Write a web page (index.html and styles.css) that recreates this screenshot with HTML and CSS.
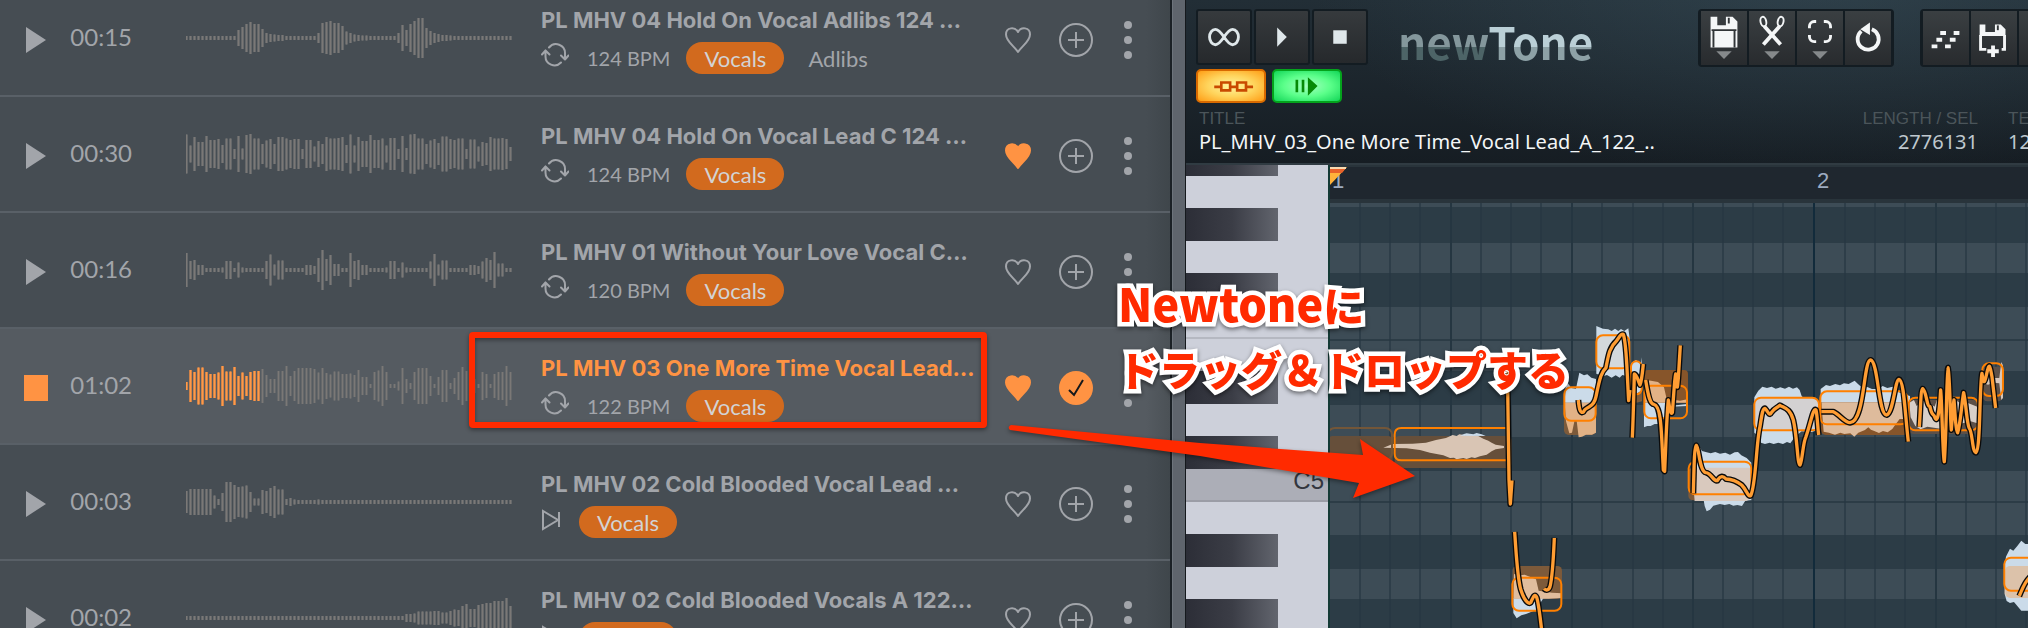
FILE: index.html
```html
<!DOCTYPE html>
<html lang="ja">
<head>
    <meta charset="UTF-8">
    <meta name="viewport" content="width=device-width, initial-scale=1.0">
    <title>Newtone drag and drop</title>
    <link rel="stylesheet" href="styles.css">
</head>
<body>

<!-- Shared icons -->
<svg class="sprite" aria-hidden="true">
    <symbol id="i-play" viewBox="0 0 24 28"><path d="M2 1v26l20-13z" fill="currentColor"/></symbol>
    <symbol id="i-stop" viewBox="0 0 24 28"><path d="M0 1h24v26H0z" fill="currentColor"/></symbol>
    <symbol id="i-loop" viewBox="0 0 28 24">
        <g fill="none" stroke="currentColor" stroke-width="2" stroke-linecap="round" stroke-linejoin="round">
            <path d="M8 4.500A9 9 0 0 1 24 10.500V16M20 12.500l4 4 3.500-4M20 19.500A9 9 0 0 1 4.500 13V7.500M1 11.500l3.500-4 4 4"/>
        </g>
    </symbol>
    <symbol id="i-shot" viewBox="0 0 20 24">
        <path d="M2 3v18l15-9zM18 4v15" fill="none" stroke="currentColor" stroke-width="2"/>
    </symbol>
    <symbol id="i-heart" viewBox="0 0 28 28">
        <path d="M14 26C9 19 2 15 2 8.500 2 1 11 .5 14 6 17 .5 26 1 26 8.500 26 15 19 19 14 26z" stroke="currentColor" stroke-width="2" stroke-linejoin="round"/>
    </symbol>
    <symbol id="i-plus" viewBox="0 0 36 36">
        <circle cx="18" cy="18" r="16" fill="none" stroke="currentColor" stroke-width="2"/>
        <path d="M18 10v16M10 18h16" stroke="currentColor" stroke-width="2"/>
    </symbol>
    <symbol id="i-check" viewBox="0 0 36 36">
        <circle cx="18" cy="18" r="17" fill="currentColor"/>
        <path d="M11 20l5 5L25 10" fill="none" stroke="#15181b" stroke-width="2"/>
    </symbol>
    <symbol id="i-more" viewBox="0 0 10 40">
        <g fill="currentColor"><circle cx="5" cy="5" r="4"/><circle cx="5" cy="20" r="4"/><circle cx="5" cy="35" r="4"/></g>
    </symbol>
</svg>

<main class="desktop">

    <!-- Sample browser -->
    <section class="browser">
        <ul class="tracks">
            <li class="track">
                <button class="play" aria-label="Play"><svg><use href="#i-play"/></svg></button>
                <span class="time">00:15</span>
                <svg class="wave" data-levels="4 4 4 4 4 4 4 4 4 4 4 4 4 16 22 28 32 28 28 18 10 8 7 6 6 4 4 4 4 4 4 4 4 10 30 32 34 30 30 24 13 10 7 6 5 5 4 4 4 4 4 4 4 10 26 16 28 34 40 40 20 14 10 8 6 6 5 4 4 4 4 4 4 4 4 4 4 4 4 4 4 4"></svg>
                <div class="info">
                    <h2>PL MHV 04 Hold On Vocal Adlibs 124 …</h2>
                    <div class="tags"><svg class="loop"><use href="#i-loop"/></svg><span class="bpm">124 BPM</span><a class="pill" href="#">Vocals</a><a class="tag" href="#">Adlibs</a></div>
                </div>
                <button class="heart" aria-label="Like"><svg><use href="#i-heart"/></svg></button>
                <button class="add" aria-label="Add"><svg><use href="#i-plus"/></svg></button>
                <button class="more" aria-label="More"><svg><use href="#i-more"/></svg></button>
            </li>
            <li class="track">
                <button class="play" aria-label="Play"><svg><use href="#i-play"/></svg></button>
                <span class="time">00:30</span>
                <svg class="wave" data-levels="39 17 34 24 24 36 28 28 30 18 31 31 10 36 11 38 40 31 31 20 27 30 20 34 34 31 28 30 30 10 28 28 15 26 20 34 31 31 32 34 18 39 17 34 26 26 38 28 28 31 17 32 32 10 36 12 39 40 31 31 20 27 30 22 35 35 30 28 31 31 10 29 29 15 24 22 34 31 31 32 30 14"></svg>
                <div class="info">
                    <h2>PL MHV 04 Hold On Vocal Lead C 124 …</h2>
                    <div class="tags"><svg class="loop"><use href="#i-loop"/></svg><span class="bpm">124 BPM</span><a class="pill" href="#">Vocals</a></div>
                </div>
                <button class="heart on" aria-label="Unlike"><svg><use href="#i-heart"/></svg></button>
                <button class="add" aria-label="Add"><svg><use href="#i-plus"/></svg></button>
                <button class="more" aria-label="More"><svg><use href="#i-more"/></svg></button>
            </li>
            <li class="track">
                <button class="play" aria-label="Play"><svg><use href="#i-play"/></svg></button>
                <span class="time">00:16</span>
                <svg class="wave" data-levels="34 18 20 10 10 4 4 4 4 5 18 18 4 15 5 4 4 4 4 4 18 31 11 19 19 4 4 4 4 4 10 10 8 24 40 22 30 12 12 4 4 34 18 20 10 10 4 4 4 4 5 18 18 4 15 5 4 4 4 4 4 17 32 11 19 19 4 4 4 4 4 10 10 8 17 24 20 36 13 13 4 4"></svg>
                <div class="info">
                    <h2>PL MHV 01 Without Your Love Vocal C…</h2>
                    <div class="tags"><svg class="loop"><use href="#i-loop"/></svg><span class="bpm">120 BPM</span><a class="pill" href="#">Vocals</a></div>
                </div>
                <button class="heart" aria-label="Like"><svg><use href="#i-heart"/></svg></button>
                <button class="add" aria-label="Add"><svg><use href="#i-plus"/></svg></button>
                <button class="more" aria-label="More"><svg><use href="#i-more"/></svg></button>
            </li>
            <li class="track active">
                <button class="play" aria-label="Stop"><svg><use href="#i-stop"/></svg></button>
                <span class="time">01:02</span>
                <svg class="wave" data-played="19" data-levels="8 32 28 37 37 28 24 24 27 40 29 29 38 20 27 20 28 30 30 34 22 14 14 30 30 40 20 30 36 36 36 36 34 27 36 26 23 29 29 24 24 25 22 32 18 18 4 28 31 40 28 4 4 9 36 14 6 28 36 36 36 20 4 18 32 32 6 16 28 38 30 36 14 4 28 24 4 24 28 28 40 28"></svg>
                <div class="info">
                    <h2>PL MHV 03 One More Time Vocal Lead…</h2>
                    <div class="tags"><svg class="loop"><use href="#i-loop"/></svg><span class="bpm">122 BPM</span><a class="pill" href="#">Vocals</a></div>
                </div>
                <button class="heart on" aria-label="Unlike"><svg><use href="#i-heart"/></svg></button>
                <button class="add on" aria-label="Added"><svg><use href="#i-check"/></svg></button>
                <button class="more" aria-label="More"><svg><use href="#i-more"/></svg></button>
            </li>
            <li class="track">
                <button class="play" aria-label="Play"><svg><use href="#i-play"/></svg></button>
                <span class="time">00:03</span>
                <svg class="wave" data-levels="22 26 26 26 26 26 26 13 6 18 40 40 34 30 31 33 20 7 7 24 22 28 32 25 25 6 8 5 4 4 4 4 4 5 4 4 4 4 4 4 4 4 4 4 4 4 4 4 4 4 4 4 4 4 4 4 4 4 4 4 4 4 4 4 4 4 4 4 4 4 4 4 4 4 4 4 4 4 4 4 4 4"></svg>
                <div class="info">
                    <h2>PL MHV 02 Cold Blooded Vocal Lead …</h2>
                    <div class="tags"><svg class="shot"><use href="#i-shot"/></svg><a class="pill" href="#">Vocals</a></div>
                </div>
                <button class="heart" aria-label="Like"><svg><use href="#i-heart"/></svg></button>
                <button class="add" aria-label="Add"><svg><use href="#i-plus"/></svg></button>
                <button class="more" aria-label="More"><svg><use href="#i-more"/></svg></button>
            </li>
            <li class="track">
                <button class="play" aria-label="Play"><svg><use href="#i-play"/></svg></button>
                <span class="time">00:02</span>
                <svg class="wave" data-levels="4 4 4 4 4 4 4 4 4 4 4 4 4 4 4 4 4 4 4 4 4 4 4 4 4 4 4 4 4 4 4 4 4 4 4 4 4 4 4 4 4 4 4 4 4 4 4 4 4 4 4 4 4 4 4 8 8 9 13 13 13 13 14 14 11 11 14 17 16 24 28 18 18 26 28 30 30 34 34 34 40 24"></svg>
                <div class="info">
                    <h2>PL MHV 02 Cold Blooded Vocals A 122…</h2>
                    <div class="tags"><svg class="shot"><use href="#i-shot"/></svg><a class="pill" href="#">Vocals</a></div>
                </div>
                <button class="heart" aria-label="Like"><svg><use href="#i-heart"/></svg></button>
                <button class="add" aria-label="Add"><svg><use href="#i-plus"/></svg></button>
                <button class="more" aria-label="More"><svg><use href="#i-more"/></svg></button>
            </li>
        </ul>
    </section>

    <div class="divider"></div>

    <!-- Newtone window -->
    <section class="newtone">
        <header class="top">
            <div class="bar">
                <div class="transport">
                    <div class="buttons">
                        <button class="tile" aria-label="Loop"><svg viewBox="0 0 54 52"><path d="M27 26C23 20 21 18 18 18a6 8 0 0 0 0 16c3 0 5-2 9-8s6-8 9-8a6 8 0 0 1 0 16c-3 0-5-2-9-8z" fill="none" stroke="#dfe7ea" stroke-width="3"/></svg></button>
                        <button class="tile" aria-label="Play"><svg viewBox="0 0 54 52"><path d="M22 16v20l10-10z" fill="#dfe7ea"/></svg></button>
                        <button class="tile" aria-label="Stop"><svg viewBox="0 0 54 52"><path d="M20 19h14v14H20z" fill="#dfe7ea"/></svg></button>
                    </div>
                    <div class="modes">
                        <button class="mode orange" aria-label="Slave to host"><svg viewBox="0 0 70 34"><path d="M16 18h8m10 0h8m10 0h8M24 13h10v9H24zM42 13h10v9H42z" fill="none" stroke="#c94a00" stroke-width="3"/></svg></button>
                        <button class="mode green" aria-label="Scrub"><svg viewBox="0 0 70 34"><path d="M22 10h3v14h-3zM29 10h3v14h-3zM36 7v21l11-11z" fill="#068a06"/></svg></button>
                    </div>
                </div>
                <div class="logo"><span class="dim">new</span><span class="lit">Tone</span></div>
                <div class="tools">
                    <button class="tool" aria-label="Save"><svg viewBox="0 0 48 56"><path d="M10 6h7v9h9V6h7l5 5v27H10z" fill="#f4f6f7"/><path d="M29 7v6M11 20h26M13 20v18M35 20v18" fill="none" stroke="#303437" stroke-width="2"/><path d="M16 42h16l-8 8z" fill="#85898b"/></svg></button>
                    <button class="tool" aria-label="Cut"><svg viewBox="0 0 48 56"><g fill="none" stroke="#f4f6f7"><path d="M15 35l17-19M33 35L16 16" stroke-width="4"/><ellipse cx="15" cy="11" rx="3" ry="5" stroke-width="2" transform="rotate(-12 15 11)"/><ellipse cx="33" cy="11" rx="3" ry="5" stroke-width="2" transform="rotate(12 33 11)"/></g><path d="M16 42h16l-8 8z" fill="#85898b"/></svg></button>
                    <button class="tool" aria-label="Select"><svg viewBox="0 0 48 56"><path d="M13 18v-2a5 5 0 0 1 5-5h2m8 0h2a5 5 0 0 1 5 5v2m0 7v2a5 5 0 0 1-5 5h-2m-8 0h-2a5 5 0 0 1-5-5v-2" fill="none" stroke="#f4f6f7" stroke-width="3"/><path d="M16 42h16l-8 8z" fill="#85898b"/></svg></button>
                    <button class="tool" aria-label="Undo"><svg viewBox="0 0 48 56"><path d="M28 19a11 11 0 1 1-11 2" fill="none" stroke="#f4f6f7" stroke-width="4"/><path d="M16 19l10-7v13z" fill="#f4f6f7"/></svg></button>
                </div>
                <div class="tools">
                    <button class="tool" aria-label="Send to piano roll"><svg viewBox="0 0 48 56"><path d="M18 21h6v4h-6zM32 21h6v4h-6zM14 28h6v4h-6zM28 28h6v4h-6zM9 35h6v4H9zM23 35h6v4h-6z" fill="#f4f6f7"/></svg></button>
                    <button class="tool" aria-label="Send to playlist"><svg viewBox="0 0 48 56"><path d="M9 14h6v8h10v-8h6l5 5v7H9z" fill="#f4f6f7"/><path d="M28 15v5" stroke="#303437" stroke-width="2"/><path d="M10 25v15h6M35 25v15h-3" fill="none" stroke="#f4f6f7" stroke-width="3"/><path d="M21 36h4v4h4v4h-4v4h-4v-4h-4v-4h4z" fill="#f4f6f7"/></svg></button>
                    <button class="tool" aria-label="Options"><svg viewBox="0 0 48 56"></svg></button>
                </div>
            </div>
            <dl class="meta">
                <div class="name"><dt>TITLE</dt><dd>PL_MHV_03_One More Time_Vocal Lead_A_122_..</dd></div>
                <div class="length"><dt>LENGTH / SEL</dt><dd>2776131</dd></div>
                <div class="tempo"><dt>TEMPO</dt><dd>122.000</dd></div>
            </dl>
        </header>

        <div class="roll">
            <div class="keys">
                <div class="key black first"></div>
                <div class="key"></div>
                <div class="key black"></div>
                <div class="key"></div>
                <div class="key black"></div>
                <div class="key line"></div>
                <div class="key"></div>
                <div class="key black"></div>
                <div class="key"></div>
                <div class="key black"></div>
                <div class="key line root"><span>C5</span></div>
                <div class="key"></div>
                <div class="key black"></div>
                <div class="key"></div>
                <div class="key black"></div>
            </div>
            <div class="editor">
                <div class="ruler">
                    <span>1</span><span>2</span>
                    <svg class="marker" viewBox="0 0 18 22"><path d="M0 0h17L0 18z" fill="#ffb23a"/><path d="M0 1h16l-4 5H0z" fill="#e8622a"/><path d="M0 1h16" stroke="#f8d9b0" stroke-width="2"/></svg>
                </div>
                <svg class="grid">
                    <defs>
                        <pattern id="beats" width="485" height="500" patternUnits="userSpaceOnUse">
                            <path d="M30 0v500M60 0v500M90 0v500M151 0v500M181 0v500M211 0v500M272 0v500M303 0v500M333 0v500M393 0v500M423 0v500M453 0v500" stroke="#253641" stroke-opacity=".6" stroke-width="2"/>
                            <path d="M121 0v500M242 0v500M363 0v500" stroke="#253641" stroke-width="2"/>
                            <path d="M484 0v500" stroke="#122b3b" stroke-width="2"/>
                        </pattern>
                    </defs>
                    <g fill="#2c3c46">
                        <rect y="4" width="100%" height="36"/>
                        <rect y="70" width="100%" height="34"/>
                        <rect y="168" width="100%" height="34"/>
                        <rect y="234" width="100%" height="34"/>
                        <rect y="332" width="100%" height="34"/>
                        <rect y="396" width="100%" height="34"/>
                        <rect y="136" width="100%" height="2"/>
                        <rect y="298" width="100%" height="2"/>
                    </g>
                    <rect width="100%" height="100%" fill="url(#beats)"/>

                    <!-- first phrase -->
                    <g transform="translate(-160 197) scale(.3333)">
                        <rect class="ghost soft" x="474" y="108" width="194" height="96" rx="14"/>
                        <rect class="ghost soft" x="674" y="108" width="351" height="96" rx="14"/>
                        <path d="M668 132l60-1 40-3 30-8 30-6 20-9 12 3 8-5 20 3 10-4 15 4 12 2 15 8 15 6 10 6 12 6 25 4v6l-25 4-12 6-15 10-20 5-15 5-10-2-15 5-10-3-20 4-8-5-12 1-20-8-40-8-30-8-40-5-70-2z" fill="#d9c5b4"/>
                        <path d="M870 107l12-5 8-2 20 3 10-4 15 4 12 5z" fill="#cbdbe9"/>
                        <rect class="note faint" x="474" y="84" width="192" height="96" rx="20"/>
                        <path class="note" d="M1012 84H694q-20 0-20 20v57q0 20 20 20h318"/>
                    </g>
                    <g transform="translate(170 97) scale(.3333)">
                        <rect class="ghost" x="38" y="798" width="148" height="98" rx="14"/>
                        <path d="M40 895h90l-22 35-30 12-14 4-14 9-10-16z" fill="#cbdbe9"/>
                        <path d="M42 822l18 4 14-2 34 14 8 34 40 6 30 2v14l-40 2-16 0H40z" fill="#e0bd9d"/>
                        <rect class="note" x="37" y="833" width="147" height="99" rx="20"/>

                        <rect class="ghost" x="192" y="304" width="96" height="101" rx="14"/>
                        <path d="M194 308l4-66 16 22 14 2 10-48 14 8 10-3 12 10 14 4v71z" fill="#cbdbe9"/>
                        <path d="M194 308h94v90l-12 6-18 0-12 6-10 2-6-50-6-2-8 38-8 2-10-36z" fill="#e2b286"/>
                        <rect class="note" x="193" y="262" width="94" height="100" rx="20"/>

                        <path d="M289 78l20 8 16 2 10 5 10-7 10 7 8-6 10 6 12-8 4 30v108l-10 5-12-3-8 8-12-7-12 7-14-8-12 4-20-8z" fill="#cbdbe9"/>
                        <rect x="290" y="107" width="98" height="98" rx="18" fill="#d3d8dc"/>
                        <rect class="note" x="289" y="106" width="99" height="99" rx="20"/>

                        <path class="ghost" d="M396 220h30v84l-16 4-14-10z"/>
                        <path d="M394 190l14-10 14 12 3-20v100l-14 8-10-12z" fill="#cbdbe9"/>
                        <rect class="note" x="393" y="184" width="32" height="99" rx="16"/>

                        <rect class="ghost strong" x="432" y="210" width="132" height="98" rx="12"/>
                        <path d="M432 308h72l24 8 34-4v6l-50 2-32 52-16 0-12 6-10 0-10 4z" fill="#cbdbe9"/>
                        <path d="M440 240l34 6 18 16 8 34 40 6 22-4v10H433v-60z" fill="#e2b286"/>
                        <rect class="note" x="433" y="257" width="128" height="98" rx="20"/>

                        <g class="pitch">
                            <path id="p1" d="M22 190L27 540L31 612L36 541"/>
                            <path id="p2" d="M44 696C50 780 52 830 62 868C72 900 85 915 92 908C100 890 104 880 110 892C116 910 120 950 125 990"/>
                            <path id="p3" d="M163 714C160 780 158 830 150 860C146 872 138 872 132 866"/>
                            <path id="p4" d="M235 300C238 335 243 340 250 336C256 322 262 326 268 320C280 314 285 305 288 290C300 230 305 215 318 203C326 160 330 140 350 122C358 112 362 100 370 103C380 130 380 200 386 302L390 270"/>
                            <path id="p5" d="M397 413C400 350 402 260 403 222C410 222 415 245 420 255C426 240 428 210 430 192"/>
                            <path id="p6" d="M437 240C445 290 450 312 462 313C485 318 484 400 490 510L494 514C498 430 500 350 505 300C510 330 512 345 517 338C522 280 523 240 527 222C532 280 532 265 535 235L541 136"/>
                        </g>
                        <g class="pitch top"><use href="#p1"/><use href="#p2"/><use href="#p3"/><use href="#p4"/><use href="#p5"/><use href="#p6"/></g>
                    </g>

                    <!-- second phrase -->
                    <g transform="translate(270 97) scale(.3333)">
                        <rect class="ghost" x="265" y="503" width="190" height="98" rx="14"/>
                        <path d="M278 503l4-60 14-6 10 16 14 4 12 3 14-4 14 5 16-3 14 6 14-7 10-1 10 10 16 8 14 14v112l-18 2-10 16-14-3-12 2-12-5-14 3-14-3-20 5-10 12-10 5-6-16-4-24z" fill="#cbdbe9"/>
                        <path d="M276 503h178v92l-16 8H284z" fill="#d9c9be"/>
                        <rect class="note" x="266" y="485" width="188" height="98" rx="20"/>

                        <path d="M463 292l12-20 12-12 14 4 14-4 12 6 14-4 14 4 12-6 12 6 12-4 8 8 6 18 12 12 38 6v84l-20 6-30-2-20 16-14 20-10-4-12 6-14-4-14 4-12-4-14 4-12-4-8-20-12-10z" fill="#cbdbe9"/>
                        <rect x="466" y="294" width="190" height="96" rx="18" fill="#d3d1d2"/>
                        <rect class="note" x="463" y="293" width="194" height="98" rx="20"/>

                        <rect class="ghost strong" x="663" y="307" width="262" height="98" rx="14"/>
                        <path d="M662 307v-40l16-12 12 3 16-6 14 4 12-6 14 2 18-10 10 10 14 12 14-3 14 6 20 0 12-9 14 6 16-4 12 14 20 8 20 6v19z" fill="#cbdbe9"/>
                        <path d="M664 307h257v50l-22 0-12 16-10 14-14 10-14-4-12 6-14-6-10-4-8-7-10 8-20 8-12 12-12-10-18 2-12-4-16 6-18-6-16-3z" fill="#debb9c"/>
                        <rect class="note" x="661" y="274" width="261" height="99" rx="20"/>

                        <rect x="926" y="300" width="210" height="102" rx="14" fill="#5d5048"/>
                        <path d="M928 308l14-8 8 18 20-16 20 8 14 10 10-30 24 4 14 20 14-14 16 10 20-2 30 12v50l-20-6-24 6-20 6-26-4-20 14-40-6-20 8-16-10-14-26z" fill="#d8cfc9"/>
                        <rect class="note" x="926" y="293" width="208" height="98" rx="20"/>

                        <rect x="1148" y="200" width="60" height="104" rx="14" fill="#5d5048"/>
                        <path d="M1146 222l30-6 6 18 16 0 6-48 5 10v98l-5 6-6-50-14-2-20 6-18-6z" fill="#d8c8bd"/>
                        <rect class="note" x="1147" y="190" width="62" height="98" rx="20"/>

                        <rect class="ghost" x="1213" y="798" width="300" height="94" rx="14"/>
                        <path d="M1214 800l4-30 12-24 10 6 12-14 12-16 12 10 90 0v200h-90l-12 0-10-12-12-14-12 3-10-6-6-22z" fill="#cbdbe9"/>
                        <rect x="1216" y="798" width="300" height="96" rx="14" fill="#dcc2aa"/>
                        <rect class="note" x="1213" y="773" width="300" height="99" rx="20"/>

                        <g class="pitch">
                            <path id="p7" d="M280 580C282 520 282 440 289 436C297 440 298 515 318 518C335 520 340 545 352 542C362 525 370 528 378 537C400 538 412 545 425 555C440 570 444 592 452 587C468 560 468 430 480 380C486 340 488 326 495 325C505 335 508 350 514 338C525 322 530 325 540 316C555 325 570 325 580 360C592 410 592 495 600 495C608 480 608 430 618 410C632 370 640 320 648 330C652 345 652 370 656 405"/>
                            <path id="p8" d="M664 335H700C720 345 735 368 750 368C795 365 790 180 812 180C835 185 835 345 860 345C880 340 885 240 897 238C912 240 915 340 925 425"/>
                            <path id="p9" d="M958 381C962 330 962 268 968 266C980 275 980 320 990 320C996 350 1000 340 1004 350C1012 375 1018 340 1022 270C1026 300 1028 470 1033 485C1040 400 1040 205 1044 203C1050 230 1050 340 1054 390C1058 340 1060 310 1062 300C1066 340 1066 390 1073 398C1082 370 1085 310 1091 278C1100 320 1100 370 1108 385C1118 395 1116 455 1128 458C1142 450 1138 260 1146 220C1152 260 1155 245 1160 222C1168 185 1170 195 1176 230L1187 324"/>
                            <path id="p10" d="M1258 888C1270 860 1276 842 1300 822"/>
                        </g>
                        <g class="pitch top"><use href="#p7"/><use href="#p8"/><use href="#p9"/><use href="#p10"/></g>
                    </g>
                </svg>
            </div>
        </div>
    </section>
</main>

<!-- Callout drawn over both windows -->
<svg class="callout" aria-hidden="true">
    <rect x="472" y="335" width="512" height="90" rx="1" fill="none" stroke="#ff2a00" stroke-width="6"/>
    <path d="M1011 425L1200 443L1363 455L1360 439L1415 476L1353 498L1359 483L1200 456L1010 430Q1007 427 1011 425z" fill="#ff2a00"/>
</svg>
<p class="callout-text"><span class="latin">Newtone</span>に<br>ドラッグ＆ドロップする</p>

<script src="script.js"></script>
</body>
</html>
```
FILE: styles.css
```css
* {
    box-sizing: border-box;
}

body {
    margin: 0;
    position: relative;
    height: 100vh;
    overflow: hidden;
    background: #464d53;
    font-family: Lato, sans-serif;
    color: #a2a5aa;
}

button {
    padding: 0;
    border: 0;
    background: none;
    color: inherit;
    display: block;
}

svg {
    display: block;
}

.sprite {
    position: absolute;
    width: 0;
    height: 0;
}

.desktop {
    display: grid;
    grid-template-columns: minmax(0, 1172fr) 14px minmax(0, 842fr);
    height: 100%;
}

/* Sample browser */
.browser {
    overflow: hidden;
    border-right: 2px solid #1b2126;
    background: linear-gradient(to left, #3f464b, #464d53 24px);
}

/* the list is scrolled a little past its first row */
.tracks {
    list-style: none;
    margin: -19px 0 0;
    padding: 0;
}

.track {
    display: flex;
    align-items: center;
    height: 116px;
    padding: 0 37px 0 24px;
    border-bottom: 2px solid #596067;
}

.track button {
    padding-top: 4px;
}

.track.active {
    background: linear-gradient(to left, #4b5156, #555b61 24px);
}

.play svg {
    width: 24px;
    height: 28px;
}

.active .play {
    color: #ff9343;
}

.time {
    width: 84px;
    padding-bottom: 4px;
    text-align: right;
    font-size: 24px;
}

.wave {
    width: 328px;
    height: 40px;
    margin-left: 54px;
    flex: none;
}

.wave .bar {
    stroke: #65686a;
    stroke-width: 3;
}

.wave .core {
    stroke: #7b7876;
    stroke-width: 1;
}

.wave .bar.played {
    stroke: #d08349;
}

.wave .core.played {
    stroke: #ff9a48;
}

.info {
    flex: 1;
    min-width: 0;
    margin-left: 27px;
    padding-top: 4px;
}

.info h2 {
    margin: 0 0 8px;
    font: 700 22px/28px Inter, sans-serif;
    white-space: nowrap;
}

.active h2 {
    color: #ff9343;
}

.tags {
    display: flex;
    align-items: center;
    height: 32px;
    font-size: 20px;
}

.tags .loop {
    width: 28px;
    height: 24px;
    margin: 0 18px 6px 0;
}

.tags .shot {
    width: 20px;
    height: 24px;
    margin: 0 18px 4px 0;
}

.bpm {
    margin-right: 16px;
}

.pill {
    display: flex;
    align-items: center;
    justify-content: center;
    width: 98px;
    height: 32px;
    border-radius: 16px;
    background: #d26a1e;
    color: #d3d3d4;
    text-decoration: none;
    font-size: 22px;
}

.tag {
    margin-left: 24px;
    color: inherit;
    text-decoration: none;
    font-size: 22px;
}

.heart {
    margin-left: 24px;
}

.heart svg {
    width: 28px;
    height: 28px;
    fill: none;
}

.heart.on svg {
    fill: currentColor;
}

.heart.on,
.add.on {
    color: #ff9343;
}

.add {
    margin-left: 26px;
}

.add svg {
    width: 36px;
    height: 36px;
}

.more {
    margin-left: 29px;
}

.more svg {
    width: 10px;
    height: 40px;
}

.divider {
    background: #5f656d;
    border-left: 1px solid #6d747c;
    border-right: 1px solid #15191d;
}

/* Newtone */
.newtone {
    display: flex;
    flex-direction: column;
    overflow: hidden;
}

.top {
    height: 165px;
    flex: none;
    border-bottom: 2px solid #303b42;
    background:
        radial-gradient(ellipse 60% 120% at 75% -10%, rgba(70, 98, 112, .35), rgba(70, 98, 112, 0)),
        linear-gradient(#222e36, #161d23);
}

.bar {
    display: flex;
    align-items: flex-start;
    height: 110px;
    padding: 9px 0 0 10px;
}

.transport {
    width: 202px;
    flex: none;
}

.buttons {
    display: flex;
    gap: 2px;
}

.tile {
    width: 56px;
    height: 56px;
    border: 2px solid #131c22;
    border-radius: 3px;
    background: linear-gradient(#363a3d, #26292c);
}

.modes {
    display: flex;
    gap: 6px;
    margin-top: 4px;
}

.mode {
    width: 70px;
    height: 34px;
    border: 2px solid #d86a00;
    border-radius: 5px;
}

.mode svg {
    width: 66px;
    height: 30px;
}

.mode.orange {
    background: radial-gradient(ellipse at center, #fff6a0, #ffd45c 50%, #ff9c14);
}

.mode.green {
    border-color: #04a31c;
    background: radial-gradient(ellipse at center, #a5ffc0, #5bff8a 50%, #12d657);
}

.logo {
    width: 300px;
    height: 60px;
    flex: none;
    font-family: "Noto Sans CJK JP", sans-serif;
    font-weight: 700;
    font-size: 44px;
    line-height: 64px;
    white-space: nowrap;
}

.logo span {
    background-clip: text;
    -webkit-background-clip: text;
    color: transparent;
}

.logo .dim {
    background-image: linear-gradient(#84979c 60%, #4d6467 60%);
}

.logo .lit {
    background-image: linear-gradient(#bacfd6 60%, #8da1a6 60%);
}

.tools {
    display: flex;
    flex: none;
    margin-right: 26px;
    padding: 1px 2px;
    border-radius: 4px;
    background: #131c22;
}

.tool {
    width: 48px;
    height: 56px;
    border: 1px solid #131c22;
    background: linear-gradient(#3a3f42, #282b2e);
}

.meta {
    display: flex;
    margin: 0;
    padding-left: 13px;
    white-space: nowrap;
}

.meta dt {
    font: 17px/18px "Liberation Sans", sans-serif;
    color: #4b555a;
}

.meta dd {
    margin: 0;
    font: 20px/28px "Noto Sans", sans-serif;
    color: #bfc8ce;
}

.meta .name {
    flex: 1;
}

.meta .name dd {
    color: #f3f6f7;
}

.meta .length {
    width: 140px;
    text-align: right;
}

.meta .tempo {
    width: 20px;
    margin-left: 30px;
}

.roll {
    display: flex;
    flex: 1;
    min-height: 0;
}

.keys {
    width: 142px;
    flex: none;
    overflow: hidden;
    background: #cdd0da;
}

.key {
    height: 32px;
}

.key.black {
    height: 33px;
    background: linear-gradient(to right, #2c2e37, #3b3d46 50%, #62656e) no-repeat;
    background-size: 92px 100%;
}

.key.first {
    height: 11px;
}

.key.line {
    height: 33px;
    border-bottom: 2px solid #b5b8c1;
}

.key.root {
    background: #acaeb7;
    border-color: #9b9da6;
    text-align: right;
    padding-right: 4px;
    font: 24px/24px "Liberation Sans", sans-serif;
    color: #33363e;
}

.editor {
    flex: 1;
    min-width: 0;
    border-left: 2px solid #143a35;
    background: #3d4c56;
}

.ruler {
    position: relative;
    display: flex;
    height: 38px;
    overflow: hidden;
    border-bottom: 4px solid #29343b;
    border-top: 2px solid #29343b;
    background: #1f272f;
    font: 22px/28px "Liberation Sans", sans-serif;
    color: #9dabc0;
}

.ruler span {
    width: 485px;
    flex: none;
    padding-left: 2px;
}

.marker {
    position: absolute;
    left: 0;
    top: 0;
    width: 18px;
    height: 22px;
}

.grid {
    width: 100%;
    height: 425px;
}

.ghost {
    fill: #7d5a3a;
}

.ghost.strong {
    fill: #87552a;
}

.ghost.soft {
    fill: #664f3a;
}

.note {
    fill: none;
    stroke: #ff8000;
    stroke-width: 6;
}

.note.faint {
    stroke: #735638;
}

.pitch {
    fill: none;
    stroke: #0b0b0b;
    stroke-width: 18;
    stroke-linejoin: round;
}

.pitch.top {
    stroke: #ff9d33;
    stroke-width: 10;
}

/* Callout */
.callout {
    position: absolute;
    left: 0;
    top: 0;
    width: 100%;
    height: 100%;
    pointer-events: none;
    filter: drop-shadow(0 2px 2px rgba(0, 0, 0, .4));
}

.callout-text {
    position: absolute;
    left: 1118px;
    top: 271px;
    margin: 0;
    font: 900 41px/64px "Noto Sans CJK JP", sans-serif;
    white-space: nowrap;
    color: #ff2a00;
    -webkit-text-stroke: 9px #fff;
    paint-order: stroke fill;
    filter: drop-shadow(0 2px 2px rgba(0, 0, 0, .5));
}

.callout-text .latin {
    font-size: 45px;
}
```
FILE: script.js
```js
// Draws the bars of each waveform preview from its list of levels
document.querySelectorAll('.wave').forEach(svg => {
    const levels = svg.dataset.levels.split(' ').map(Number);
    const played = Number(svg.dataset.played) || 0;

    function addPath(name, from, to) {
        const path = document.createElementNS('http://www.w3.org/2000/svg', 'path');
        let d = '';
        for (let i = from; i < to; i++) {
            d += `M${i * 4 + 0.5} ${20 - levels[i] / 2}v${levels[i]}`;
        }
        path.setAttribute('d', d);
        path.setAttribute('class', name);
        svg.appendChild(path);
    }

    addPath('bar played', 0, played);
    addPath('core played', 0, played);
    addPath('bar', played, levels.length);
    addPath('core', played, levels.length);
});
```
